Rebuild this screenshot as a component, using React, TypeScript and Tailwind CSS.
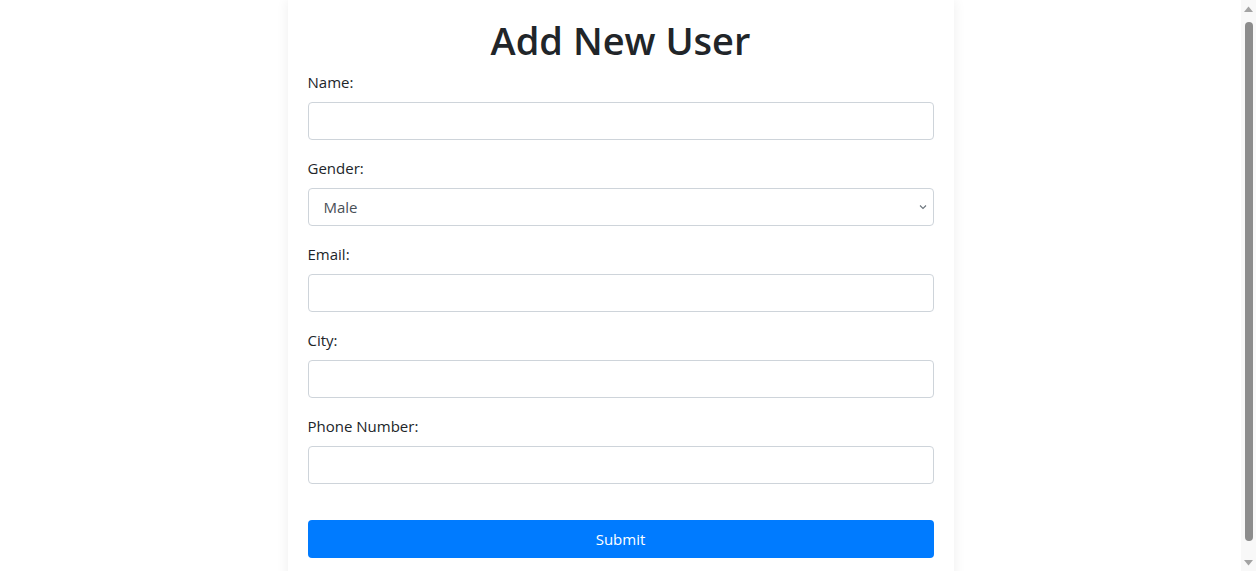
import React from "react";

const fields = [
  { label: "Name:", type: "text" },
  { label: "Gender:", type: "select" },
  { label: "Email:", type: "email" },
  { label: "City:", type: "text" },
  { label: "Phone Number:", type: "tel" },
];

function FakeScrollbar() {
  return (
    <div className="flex h-full w-[15px] shrink-0 flex-col items-center bg-[#f8f8f8]">
      <svg width="15" height="17" viewBox="0 0 15 17" className="shrink-0">
        <path d="M3 12 L7.5 6.5 L12 12 Z" fill="#a3a3a3" />
      </svg>
      <div className="mt-[5px] h-[519px] w-[8px] rounded-full bg-[#8c8c8c]" />
      <div className="flex-1" />
      <svg width="15" height="17" viewBox="0 0 15 17" className="shrink-0">
        <path d="M3 6 L7.5 11.5 L12 6 Z" fill="#a3a3a3" />
      </svg>
    </div>
  );
}

export default function App() {
  return (
    <div
      className="flex h-[571px] overflow-hidden bg-white text-[#212529]"
      style={{ fontFamily: '"Open Sans", "Noto Sans", sans-serif' }}
    >
      <div className="min-w-0 flex-1 overflow-hidden">
        <div className="mx-auto w-[666px] bg-white px-5 pt-[16px] pb-5 shadow-[0_0_12px_rgba(0,0,0,0.07)]">
          <h1 className="mb-[6px] text-center text-[38px] font-semibold leading-[48px] text-[#212529]">
            Add New User
          </h1>
          <form onSubmit={(e) => e.preventDefault()} className="flex flex-col">
            {fields.map((f) => (
              <div key={f.label} className="mb-4">
                <label className="mb-2 block text-[15px] leading-6">{f.label}</label>
                {f.type === "select" ? (
                  <div className="relative">
                    <select className="block h-[38px] w-full appearance-none rounded border border-[#ced4da] bg-white pl-[15px] pr-8 text-[15px] text-[#495057] outline-none">
                      <option>Male</option>
                      <option>Female</option>
                      <option>Other</option>
                    </select>
                    <svg
                      className="pointer-events-none absolute right-[6px] top-1/2 -translate-y-1/2"
                      width="10"
                      height="10"
                      viewBox="0 0 10 10"
                    >
                      <path d="M2 3.5 L5 6.5 L8 3.5" fill="none" stroke="#6c757d" strokeWidth="1.1" />
                    </svg>
                  </div>
                ) : (
                  <input
                    type={f.type}
                    className="block h-[38px] w-full rounded border border-[#ced4da] bg-white px-3 text-[15px] text-[#495057] outline-none"
                  />
                )}
              </div>
            ))}
            <button
              type="submit"
              className="mt-5 block h-[38px] w-full rounded bg-[#007bff] text-[15px] leading-6 text-white"
            >
              Submit
            </button>
          </form>
          <div className="h-[20px]" />
        </div>
      </div>
      <FakeScrollbar />
    </div>
  );
}
